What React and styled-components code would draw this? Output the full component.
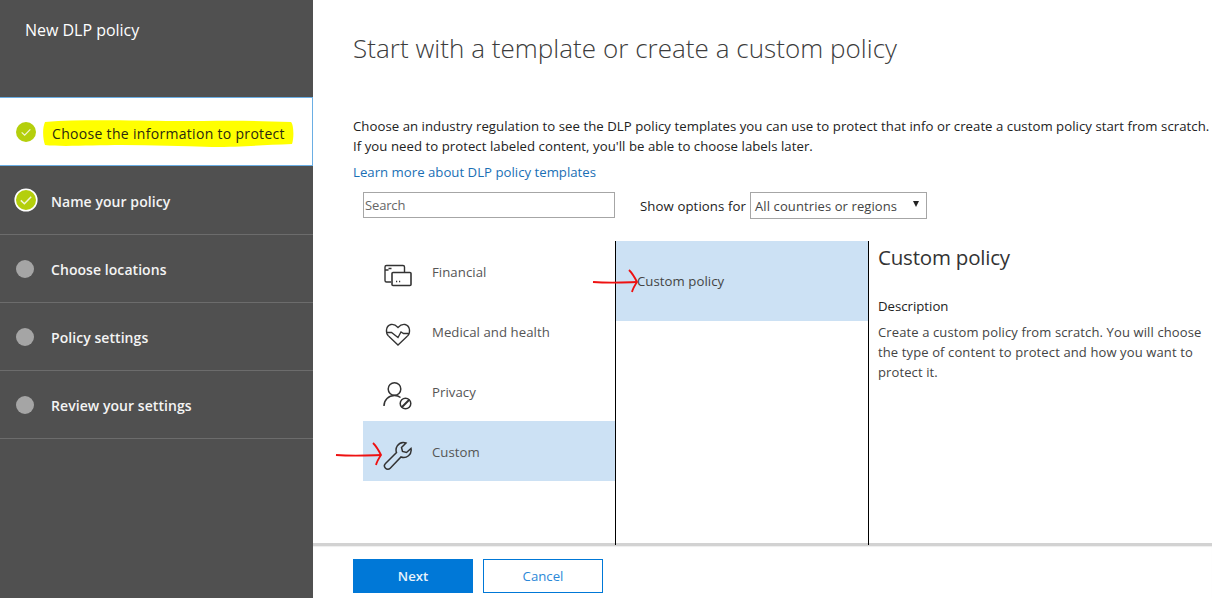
import React from 'react'
import styled, { createGlobalStyle } from 'styled-components';

const Global = createGlobalStyle`
    html, body { margin: 0; padding: 0; background: #fff; }
    body { font-family: "Open Sans", "Noto Sans", sans-serif; overflow: hidden; }
`;

const Page = styled.div`
    display: flex;
    width: 1212px;
    height: 598px;
    overflow: hidden;
`;

const Sidebar = styled.aside`
    width: 313px;
    flex: none;
    background: #505050;
    color: #fff;
`;

const SideTitle = styled.div`
    height: 97px;
    box-sizing: border-box;
    padding: 19px 0 0 25px;
    font-size: 16px;
    line-height: 22px;
    letter-spacing: -0.02px;
`;

const Step = styled.div`
    display: flex;
    align-items: center;
    box-sizing: border-box;
    height: ${p => p.$h || 68}px;
    padding-left: ${p => p.$active ? 16 : 14}px;
    background: ${p => p.$active ? '#fff' : 'transparent'};
    border-bottom: 1px solid ${p => p.$active ? '#6aaee4' : '#6c6c6c'};
    border-top: ${p => p.$active ? '1px solid #6aaee4' : 'none'};
    border-right: ${p => p.$active ? '1px solid #6aaee4' : 'none'};
`;

const StepLabel = styled.span`
    position: relative;
    top: ${p => p.$active ? 2 : 1}px;
    margin-left: ${p => p.$gap}px;
    font-size: 14px;
    font-weight: ${p => p.$active ? 400 : 600};
    color: ${p => p.$active ? '#2a2a10' : '#f4f4f4'};
    letter-spacing: ${p => p.$active ? '0.31px' : '0.06px'};
    white-space: nowrap;
`;

const Highlight = styled.svg`
    position: absolute;
    left: -9px;
    top: -6px;
`;

const LabelText = styled.span`
    position: relative;
`;

const Dot = styled.span`
    width: 18px;
    height: 18px;
    margin-left: 2px;
    border-radius: 50%;
    background: #a5a5a5;
    flex: none;
`;

const Main = styled.main`
    flex: 1;
    min-width: 0;
    display: flex;
    flex-direction: column;
`;

const Content = styled.div`
    height: 543px;
    box-sizing: border-box;
    padding: 30px 0 0 40px;
    color: #333;
`;

const Title = styled.h1`
    margin: 0;
    font-size: 26px;
    line-height: 36px;
    font-weight: 300;
    letter-spacing: 0.04px;
    color: #3c3c3c;
    white-space: nowrap;
`;

const Intro = styled.p`
    margin: 50px 0 0;
    width: 880px;
    font-size: 13.2px;
    line-height: 20px;
    letter-spacing: 0.04px;
    color: #222;
    white-space: nowrap;
`;

const LearnLink = styled.a`
    display: block;
    margin-top: 7px;
    font-size: 13.2px;
    line-height: 18px;
    letter-spacing: 0.01px;
    color: #1a6fb5;
`;

const Filters = styled.div`
    display: flex;
    align-items: center;
    margin: 10px 0 0 10px;
    height: 27px;
`;

const Search = styled.input`
    width: 252px;
    height: 26px;
    box-sizing: border-box;
    padding: 0 1px;
    border: 1px solid #a6a6a6;
    font: 13px "Open Sans", sans-serif;
    letter-spacing: -0.15px;
    &::placeholder { color: #666; opacity: 1; }
`;

const ShowLabel = styled.span`
    margin: 2px 0 0 25px;
    font-size: 13.2px;
    letter-spacing: 0.1px;
    color: #222;
`;

const Select = styled.div`
    display: flex;
    align-items: center;
    justify-content: space-between;
    box-sizing: border-box;
    width: 177px;
    height: 27px;
    margin: 2px 0 0 4px;
    padding: 0 7px 0 4px;
    border: 1px solid #a6a6a6;
    font-size: 13px;
    letter-spacing: 0.1px;
    color: #444;
`;

const Caret = styled.span`
    width: 0;
    height: 0;
    margin-bottom: 3px;
    border-left: 3px solid transparent;
    border-right: 3px solid transparent;
    border-top: 6px solid #222;
`;

const Columns = styled.div`
    position: relative;
    display: flex;
    margin: 23px 0 0 10px;
    height: 304px;
`;

const Categories = styled.div`
    width: 252px;
    flex: none;
`;

const Category = styled.div`
    position: relative;
    display: flex;
    align-items: center;
    height: 60px;
    padding-left: 20px;
    background: ${p => p.$selected ? '#cce1f4' : 'transparent'};
    font-size: 13.2px;
    letter-spacing: 0.05px;
    color: #555;
`;

const CategoryIcon = styled.span`
    width: 30px;
    height: 30px;
    display: flex;
    flex: none;
    margin: 10px 19px 0 0;
`;

const CategoryLabel = styled.span`
    margin-top: 2px;
`;

const Policies = styled.div`
    width: 252px;
    flex: none;
    border-left: 1px solid #000;
    border-right: 1px solid #000;
`;

const PolicyRow = styled.div`
    position: relative;
    height: 80px;
    display: flex;
    align-items: center;
    padding-left: 21px;
    background: #cce1f4;
    font-size: 13.2px;
    letter-spacing: 0.05px;
    color: #444;
`;

const Detail = styled.div`
    padding: 2px 0 0 9px;
    width: 334px;
    flex: none;
`;

const DetailTitle = styled.h2`
    margin: 0;
    font-size: 20.5px;
    line-height: 28px;
    font-weight: 400;
    letter-spacing: -0.2px;
    color: #333;
`;

const DetailHeading = styled.div`
    margin-top: 26px;
    font-size: 13.2px;
    line-height: 18px;
    color: #222;
`;

const DetailText = styled.p`
    margin: 7px 0 0;
    width: 334px;
    font-size: 13px;
    line-height: 20px;
    letter-spacing: 0.12px;
    color: #444;
`;

const Footer = styled.footer`
    flex: 1;
    display: flex;
    gap: 10px;
    padding: 13px 0 0 40px;
    border-top: 3px solid #d2d2d2;
    box-shadow: inset 0 1px 1px #eee;
`;

const Button = styled.button`
    width: 120px;
    height: 34px;
    box-sizing: border-box;
    padding: 0 0 1px;
    border: 1px solid #0078d7;
    background: ${p => p.$primary ? '#0078d7' : '#fff'};
    color: ${p => p.$primary ? '#e8f2fb' : '#2b88d8'};
    font: ${p => p.$primary ? 600 : 400} 13.2px "Open Sans", sans-serif;
`;

const Arrow = styled.svg`
    position: absolute;
    left: ${p => p.$left}px;
    top: ${p => p.$top}px;
    overflow: visible;
`;

const CheckIcon = ({ ring }) => (
    <svg width={ring ? 24 : 20} height={ring ? 24 : 20} viewBox="0 0 24 24" style={{ flex: 'none' }}>
        <circle cx="12" cy="12" r={ring ? 10.8 : 12} fill="#b4cf0c" stroke={ring ? '#fff' : 'none'} strokeWidth="1.6" />
        <path d="M6.8 12.4l3.6 3.4 6.8-7" fill="none" stroke="#f2f6d6" strokeWidth="1.5" />
    </svg>
);

const CardsIcon = () => (
    <svg width="30" height="30" viewBox="0 0 30 30" fill="none" stroke="#333" strokeWidth="1.4">
        <path d="M8 21H3.500q-1.500 0-1.500-1.500V6q0-1.500 1.500-1.500H20q1.500 0 1.500 1.500v5" />
        <path d="M2 9h3.500M5.500 7.500h3" />
        <rect x="9" y="11.500" width="19" height="13" rx="1" strokeWidth="1.600" />
        <path d="M13 20.500h1.200M16 20.500h1.200" />
    </svg>
);

const HeartIcon = () => (
    <svg width="30" height="30" viewBox="0 0 30 30" fill="none" stroke="#333" strokeWidth="1.3">
        <path d="M5.500 15C2 11.500 3 4.500 8 3.500c3-.5 5 .8 7 3 2-2.200 4-3.500 7-3 5 1 6 8 2.500 11.500" />
        <path d="M4 11.500h4.500l6.500 5 3-5.500 2.500 1.500h5.500" />
        <path d="M5.500 15L15 24l9.500-9" />
    </svg>
);

const PrivacyIcon = () => (
    <svg width="30" height="30" viewBox="0 0 30 30" fill="none" stroke="#333" strokeWidth="1.500">
        <circle cx="11.500" cy="8" r="6.300" />
        <path d="M1 25c0-6 4.500-10.500 10.500-10.500 2.500 0 4.500.8 6 2" />
        <circle cx="22.500" cy="22.500" r="5.300" />
        <path d="M19 26l7-7" strokeWidth="2" />
    </svg>
);

const WrenchIcon = () => (
    <svg width="30" height="30" viewBox="0 0 30 30" fill="none" stroke="#333" strokeWidth="1.500">
        <path d="M20 1.500a7.500 7.500 0 0 0-6.500 10L2.500 22.500a3.300 3.300 0 0 0 4.700 4.700L18 16a7.500 7.500 0 0 0 10-8.500l-4.500 4-4-1-1-4 4.500-4.500a7 7 0 0 0-3-.5z" />
    </svg>
);

const RedArrow = ({ left, top, width }) => (
    <Arrow $left={left} $top={top} width={width} height="24" viewBox={`0 0 ${width} 24`} fill="none" stroke="#ee1111" strokeWidth="1.800">
        <path d={`M0 13c${width * 0.4} 1.500 ${width * 0.7} 0.500 ${width - 1} 0`} />
        <path d={`M${width - 9} 1c3 3 6 8 8 12-2 3-4 6-5 10`} />
    </Arrow>
);

const steps = [
    { label: 'Name your policy', done: true },
    { label: 'Choose locations' },
    { label: 'Policy settings' },
    { label: 'Review your settings' },
];

class App extends React.Component {
  render() {
    return (
        <Page>
            <Global />
            <Sidebar>
                <SideTitle>New DLP policy</SideTitle>
                <Step $active $h={69}>
                    <CheckIcon />
                    <StepLabel $active $gap={16}>
                        <Highlight width="252" height="32" viewBox="0 0 252 32">
                            <path d="M2 4c40-3 90-1 130-1 40 0 70-1 116 1 3 3 3 17 1 22-30 1-50 3-80 3-30-1-60-2-90-2-30 0-60 2-77 0-2-6-3-16 0-23z" fill="#ffff00" />
                        </Highlight>
                        <LabelText>Choose the information to protect</LabelText>
                    </StepLabel>
                </Step>
                {steps.map(s => (
                    <Step key={s.label} $h={s.done ? 69 : 68}>
                        {s.done ? <CheckIcon ring /> : <Dot />}
                        <StepLabel $gap={s.done ? 13 : 17}>{s.label}</StepLabel>
                    </Step>
                ))}
            </Sidebar>
            <Main>
                <Content>
                    <Title>Start with a template or create a custom policy</Title>
                    <Intro>
                        Choose an industry regulation to see the DLP policy templates you can use to protect that info or create a custom policy start from scratch.<br />
                        If you need to protect labeled content, you'll be able to choose labels later.
                    </Intro>
                    <LearnLink>Learn more about DLP policy templates</LearnLink>
                    <Filters>
                        <Search placeholder="Search" />
                        <ShowLabel>Show options for</ShowLabel>
                        <Select>All countries or regions<Caret /></Select>
                    </Filters>
                    <Columns>
                        <Categories>
                            <Category>
                                <CategoryIcon><CardsIcon /></CategoryIcon>
                                <CategoryLabel>Financial</CategoryLabel>
                            </Category>
                            <Category>
                                <CategoryIcon><HeartIcon /></CategoryIcon>
                                <CategoryLabel>Medical and health</CategoryLabel>
                            </Category>
                            <Category>
                                <CategoryIcon><PrivacyIcon /></CategoryIcon>
                                <CategoryLabel>Privacy</CategoryLabel>
                            </Category>
                            <Category $selected>
                                <RedArrow left={-27} top={21} width={46} />
                                <CategoryIcon><WrenchIcon /></CategoryIcon>
                                <CategoryLabel>Custom</CategoryLabel>
                            </Category>
                        </Categories>
                        <Policies>
                            <PolicyRow>
                                <RedArrow left={-23} top={28} width={45} />
                                Custom policy
                            </PolicyRow>
                        </Policies>
                        <Detail>
                            <DetailTitle>Custom policy</DetailTitle>
                            <DetailHeading>Description</DetailHeading>
                            <DetailText>Create a custom policy from scratch. You will choose the type of content to protect and how you want to protect it.</DetailText>
                        </Detail>
                    </Columns>
                </Content>
                <Footer>
                    <Button $primary>Next</Button>
                    <Button>Cancel</Button>
                </Footer>
            </Main>
        </Page>
    )
  }
}

export default App;
